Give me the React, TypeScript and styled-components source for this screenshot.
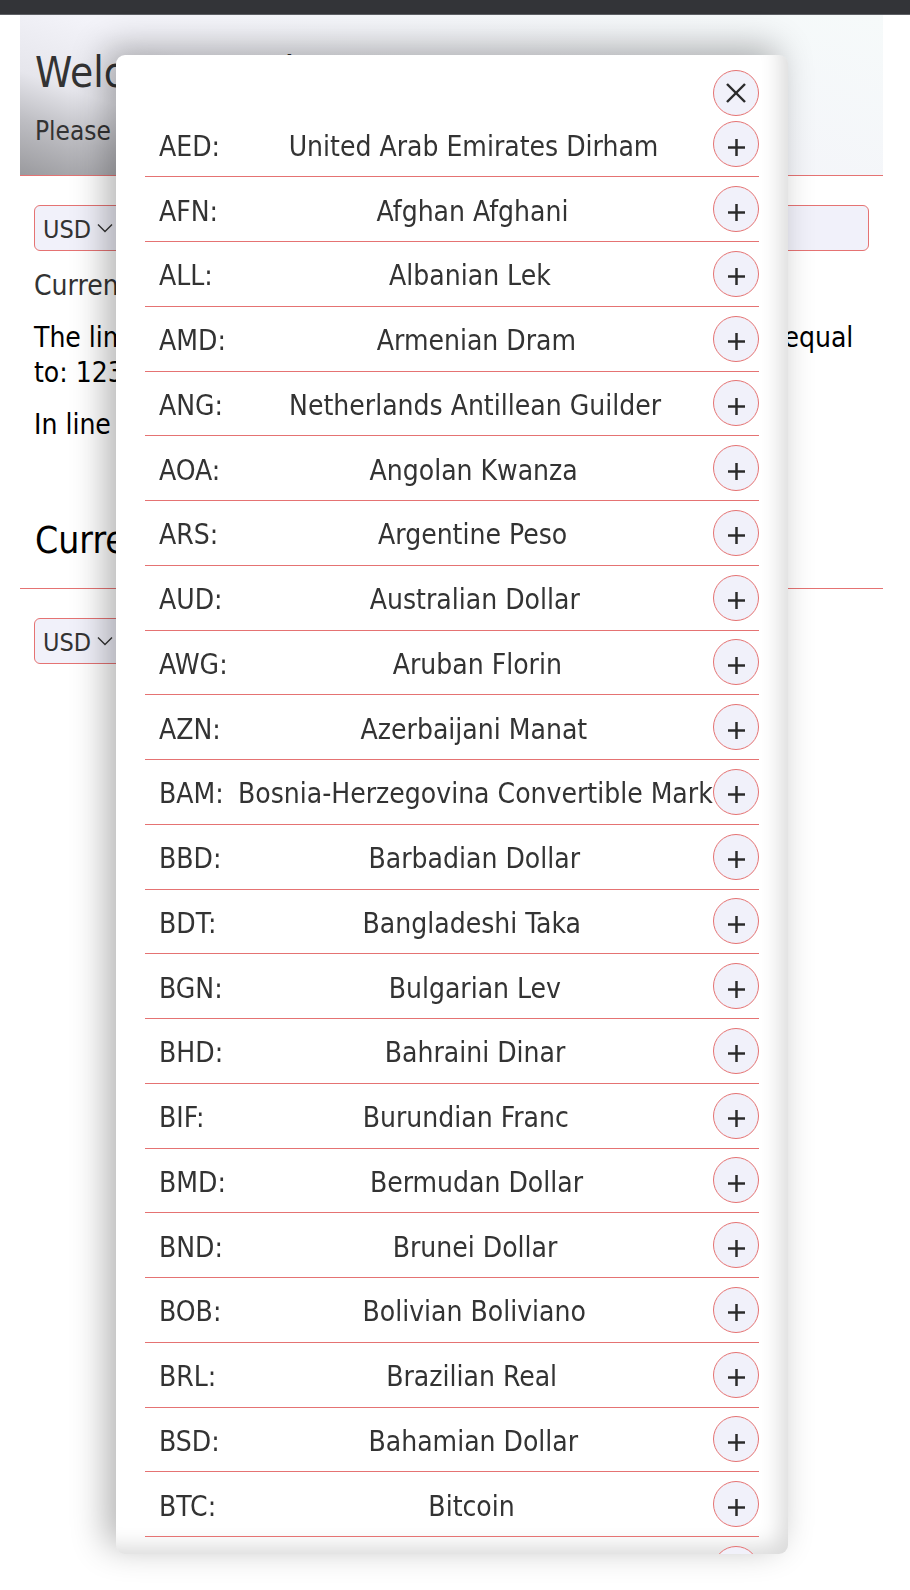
import React from "react";
import styled, { createGlobalStyle } from "styled-components";

const GlobalStyle = createGlobalStyle`
  html, body {
    margin: 0;
    padding: 0;
    background: #ffffff;
  }
  body {
    font-family: "DejaVu Sans Condensed", "DejaVu Sans", sans-serif;
    font-stretch: condensed;
    color: #333333;
  }
  * { box-sizing: border-box; }
`;

const RED = "#e57373";
const LAVENDER = "#f1f1fa";

const TopBar = styled.div`
  height: 15px;
  background: #333438;
  border-bottom: 1px solid #5d5f64;
`;

const Page = styled.div`
  margin: 0 27px 0 20px;
`;

const Hero = styled.header`
  padding: 32.5px 15px 28.5px;
  border-bottom: 1px solid ${RED};
  background: linear-gradient(
    200deg,
    #f6fafa 0%,
    #f3f3f9 62%,
    #e6e6ec 78%,
    #bebec3 88%,
    #9a9a9e 100%
  );
`;

const Title = styled.h1`
  margin: 0;
  font-size: 42px;
  line-height: 50px;
  font-weight: normal;
  color: #333333;
  white-space: nowrap;
`;

const Subtitle = styled.p`
  margin: 18px 0 0;
  font-size: 26px;
  line-height: 31px;
  color: #333333;
  white-space: nowrap;
`;

const Panel = styled.section`
  padding: 29px 14px 0;
`;

const Controls = styled.div`
  display: flex;
  gap: 10px;
  height: 46px;
`;

const SelectWrap = styled.div`
  position: relative;
  flex: none;
  width: 96px;
`;

const Select = styled.select`
  appearance: none;
  -webkit-appearance: none;
  width: 100%;
  height: 46px;
  padding: 2px 30px 0 8px;
  font-family: inherit;
  font-stretch: condensed;
  font-size: 25px;
  color: #333333;
  background: ${LAVENDER};
  border: 1px solid ${RED};
  border-radius: 6px;
  outline: none;
`;

const Chevron = styled.svg`
  position: absolute;
  left: 63px;
  top: 18px;
  pointer-events: none;
`;

const AmountInput = styled.input`
  flex: 1;
  min-width: 0;
  height: 46px;
  padding: 0 10px;
  font-family: inherit;
  font-size: 25px;
  background: ${LAVENDER};
  border: 1px solid ${RED};
  border-radius: 6px;
  outline: none;
`;

const Info = styled.p<{ $tone?: "muted" | "strong" }>`
  margin: 17px 0 0;
  font-size: 28px;
  line-height: 35px;
  color: ${(p) => (p.$tone === "muted" ? "#333333" : "#000000")};
`;

const SectionHead = styled.div`
  margin-top: 77px;
  padding: 0 15px 25px;
  border-bottom: 1px solid ${RED};
`;

const SectionTitle = styled.h2`
  margin: 0;
  font-size: 37px;
  line-height: 44px;
  font-weight: normal;
  color: #000000;
  white-space: nowrap;
`;

const Modal = styled.div`
  position: fixed;
  top: 55px;
  left: 116px;
  width: 672px;
  height: 1499px;
  padding: 15px 29px 0;
  background: #ffffff;
  border-radius: 9px;
  overflow: hidden;
  box-shadow: -10px -8px 35px rgba(0, 0, 0, 0.3),
    inset -14px -14px 20px -6px rgba(0, 0, 0, 0.14);
`;

const CloseBar = styled.div`
  display: flex;
  justify-content: flex-end;
  margin-bottom: -3.5px;
  position: relative;
  z-index: 1;
`;

const RoundButton = styled.button`
  flex: none;
  width: 46px;
  height: 46px;
  padding: 0;
  border: 1px solid ${RED};
  border-radius: 50%;
  background: ${LAVENDER};
  display: grid;
  place-items: center;
  cursor: pointer;
`;

const PlusIcon = styled.svg`
  margin-top: 6px;
`;

const List = styled.ul`
  list-style: none;
  margin: 0;
  padding: 0;
`;

const Row = styled.li`
  display: flex;
  align-items: center;
  height: 64.76px;
  border-bottom: 1px solid ${RED};
  font-size: 28px;
  color: #333333;
`;

const Code = styled.span`
  flex: none;
  padding: 4px 14px 0;
`;

const Name = styled.span`
  flex: 1;
  padding-top: 4px;
  text-align: center;
  white-space: nowrap;
`;

const currencies: [string, string][] = [
  ["AED", "United Arab Emirates Dirham"],
  ["AFN", "Afghan Afghani"],
  ["ALL", "Albanian Lek"],
  ["AMD", "Armenian Dram"],
  ["ANG", "Netherlands Antillean Guilder"],
  ["AOA", "Angolan Kwanza"],
  ["ARS", "Argentine Peso"],
  ["AUD", "Australian Dollar"],
  ["AWG", "Aruban Florin"],
  ["AZN", "Azerbaijani Manat"],
  ["BAM", "Bosnia-Herzegovina Convertible Mark"],
  ["BBD", "Barbadian Dollar"],
  ["BDT", "Bangladeshi Taka"],
  ["BGN", "Bulgarian Lev"],
  ["BHD", "Bahraini Dinar"],
  ["BIF", "Burundian Franc"],
  ["BMD", "Bermudan Dollar"],
  ["BND", "Brunei Dollar"],
  ["BOB", "Bolivian Boliviano"],
  ["BRL", "Brazilian Real"],
  ["BSD", "Bahamian Dollar"],
  ["BTC", "Bitcoin"],
  ["BTN", "Bhutanese Ngultrum"],
  ["BWP", "Botswanan Pula"],
];

const ChevronIcon = () => (
  <Chevron width="16" height="10" viewBox="0 0 16 10">
    <polyline points="1,1.5 8,8.5 15,1.5" fill="none" stroke="#333" strokeWidth="1.4" />
  </Chevron>
);

const CurrencySelect = () => (
  <SelectWrap>
    <Select defaultValue="USD">
      <option value="USD">USD</option>
      <option value="EUR">EUR</option>
    </Select>
    <ChevronIcon />
  </SelectWrap>
);

export default function App() {
  return (
    <>
      <GlobalStyle />
      <TopBar />
      <Page>
        <Hero>
          <Title>Welcome to the currency converter</Title>
          <Subtitle>Please choose a base currency and an amount</Subtitle>
        </Hero>
        <Panel>
          <Controls>
            <CurrencySelect />
            <AmountInput defaultValue="" />
          </Controls>
          <Info $tone="muted">Currency: US Dollar</Info>
          <Info>
            The limit of the selected currency for this active account is equal to: 123.45 USD
          </Info>
          <Info>In line with your account settings</Info>
        </Panel>
        <SectionHead>
          <SectionTitle>Currencies to compare</SectionTitle>
        </SectionHead>
        <Panel>
          <Controls>
            <CurrencySelect />
          </Controls>
        </Panel>
      </Page>

      <Modal role="dialog">
        <CloseBar>
          <RoundButton aria-label="Close">
            <svg width="20" height="20" viewBox="0 0 20 20">
              <line x1="1" y1="1" x2="19" y2="19" stroke="#2b2b2b" strokeWidth="2.4" />
              <line x1="19" y1="1" x2="1" y2="19" stroke="#2b2b2b" strokeWidth="2.4" />
            </svg>
          </RoundButton>
        </CloseBar>
        <List>
          {currencies.map(([code, name]) => (
            <Row key={code}>
              <Code>{code}:</Code>
              <Name>{name}</Name>
              <RoundButton aria-label={`Add ${code}`}>
                <PlusIcon width="17" height="17" viewBox="0 0 17 17">
                  <line x1="8.5" y1="0" x2="8.5" y2="17" stroke="#2b2b2b" strokeWidth="2.5" />
                  <line x1="0" y1="8.5" x2="17" y2="8.5" stroke="#2b2b2b" strokeWidth="2.5" />
                </PlusIcon>
              </RoundButton>
            </Row>
          ))}
        </List>
      </Modal>
    </>
  );
}
